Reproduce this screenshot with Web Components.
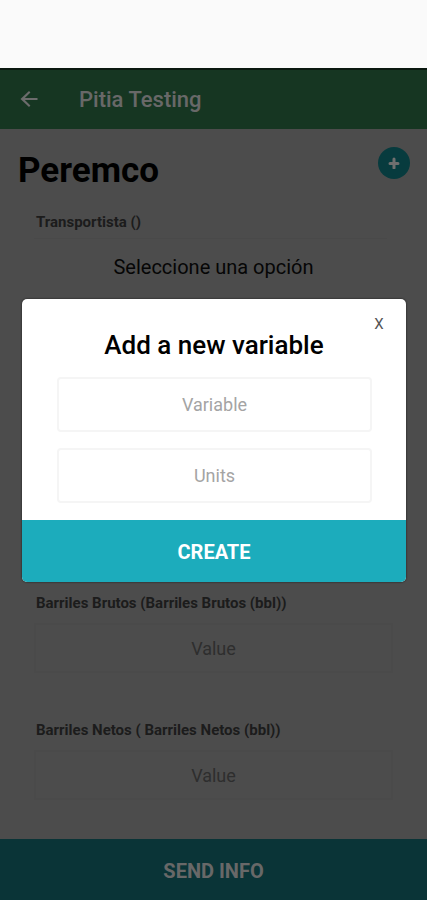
<!DOCTYPE html>
<html lang="es">
<head>
<meta charset="utf-8">
<meta name="viewport" content="width=device-width, initial-scale=1">
<title>Pitia Testing</title>
<style>
body {
  margin: 0;
  min-height: 100vh;
  display: flex;
  flex-direction: column;
  background: #fafafa;
  font-family: Roboto, "Liberation Sans", sans-serif;
}
</style>
</head>
<body>

<pitia-screen>
  <app-header slot="header">Pitia Testing</app-header>
  <title-row>Peremco</title-row>
  <field-list>
    <select-field label="Transportista ()" option="Seleccione una opción"></select-field>
    <value-field class="brutos" label="Barriles Brutos (Barriles Brutos (bbl))"></value-field>
    <value-field class="netos" label="Barriles Netos ( Barriles Netos (bbl))"></value-field>
  </field-list>
  <action-button slot="footer" dim>SEND INFO</action-button>
  <variable-dialog slot="dialog">Add a new variable</variable-dialog>
</pitia-screen>

<script>
/**
 * Attaches an open shadow root filled with the markup.
 *
 */
function render (element, markup) {
  const template = document.createElement('template')
  template.innerHTML = markup
  element.attachShadow({ mode: 'open' })
    .appendChild(template.content.cloneNode(true))
}

customElements.define('pitia-screen',
/**
 * The screen with its header, content, footer and dialog.
 *
 */
  class extends HTMLElement {
    constructor () {
      super()
      render(this, `
<style>
:host {
  flex: 1;
  display: flex;
  flex-direction: column;
  padding-top: 68px;
}
.app {
  flex: 1;
  display: flex;
  flex-direction: column;
  position: relative;
  background: #989898;
}
main {
  flex: 1;
}
.overlay {
  position: absolute;
  inset: 0;
  box-sizing: border-box;
  padding: 231px 21px 0 22px;
  background: rgba(0, 0, 0, .5);
}
</style>
<div class="app">
  <slot name="header"></slot>
  <main><slot></slot></main>
  <slot name="footer"></slot>
  <div class="overlay"><slot name="dialog"></slot></div>
</div>
`)
    }
  }
)

customElements.define('app-header',
/**
 * Top bar with the back button.
 *
 */
  class extends HTMLElement {
    constructor () {
      super()
      render(this, `
<style>
:host {
  display: block;
  background: #2c6c44;
  border-top: 2px solid #14301e;
}
header {
  display: flex;
  align-items: center;
  gap: 38px;
  height: 59px;
  padding: 0 17px;
}
button {
  display: flex;
  padding: 0;
  border: 0;
  background: none;
}
svg {
  fill: #d8d8d8;
}
h1 {
  margin: 0;
  color: #d0d0d0;
  font-size: 22px;
  font-weight: 500;
  line-height: 28px;
}
</style>
<header>
  <button type="button" aria-label="Back">
    <svg width="24" height="24" viewBox="0 0 24 24"><path d="M20.500 10H7.83l5.59-5.59L12 3l-8.500 8 8.500 8 1.41-1.41L7.83 12H20.500z"/></svg>
  </button>
  <h1><slot></slot></h1>
</header>
`)
    }
  }
)

customElements.define('title-row',
/**
 * Page title and the round add button.
 *
 */
  class extends HTMLElement {
    constructor () {
      super()
      render(this, `
<style>
:host {
  display: flex;
  justify-content: space-between;
  align-items: flex-start;
  padding: 18px 17px 0 18px;
}
h2 {
  margin: 4px 0 0;
  color: #000;
  font-size: 35px;
  font-weight: 700;
  line-height: 40px;
}
button {
  display: flex;
  align-items: center;
  justify-content: center;
  width: 32px;
  height: 32px;
  padding: 0;
  border: 0;
  border-radius: 50%;
  background: #0f767c;
}
</style>
<h2><slot></slot></h2>
<button type="button" aria-label="Add variable">
  <svg width="12" height="12" viewBox="0 0 12 12"><path d="M6 2v9M2 6.500h8" stroke="#dedede" stroke-width="3" stroke-linecap="round"/></svg>
</button>
`)
    }
  }
)

customElements.define('field-list',
/**
 * Rows of fields, one every 127px.
 *
 */
  class extends HTMLElement {
    constructor () {
      super()
      render(this, `
<style>
:host {
  display: grid;
  grid-auto-rows: 100px;
  row-gap: 27px;
  padding: 21px 34px 0;
}
/* rows 2 and 3 lie behind the dialog */
::slotted(.brutos) {
  grid-row: 4;
}
::slotted(.netos) {
  grid-row: 5;
}
</style>
<slot></slot>
`)
    }
  }
)

const fieldStyle = `
:host {
  display: block;
}
label {
  display: block;
  margin-bottom: 10px;
  padding-left: 2px;
  color: #383838;
  font-size: 15px;
  font-weight: 700;
  line-height: 20px;
}
input, select {
  display: block;
  box-sizing: border-box;
  width: 100%;
  height: 50px;
  padding: 0;
  border: 2px solid #959595;
  background: none;
  font-family: inherit;
  text-align: center;
}
`

customElements.define('select-field',
/**
 * Label with a drop-down under a thin rule.
 *
 */
  class extends HTMLElement {
    constructor () {
      super()
      render(this, `
<style>
${fieldStyle}
label {
  margin: 0 6px 3px 0;
  padding-bottom: 6px;
  border-bottom: 1px solid #929292;
}
select {
  appearance: none;
  border-color: transparent;
  color: #0c0c0c;
  font-size: 20px;
  text-align-last: center;
}
</style>
<label for="choice"></label>
<select id="choice"><option></option></select>
`)
      this.shadowRoot.querySelector('label').textContent = this.getAttribute('label')
      this.shadowRoot.querySelector('option').textContent = this.getAttribute('option')
    }
  }
)

customElements.define('value-field',
/**
 * Label with a value box.
 *
 */
  class extends HTMLElement {
    constructor () {
      super()
      render(this, `
<style>
${fieldStyle}
input {
  font-size: 18px;
}
input::placeholder {
  color: #5c5c5c;
}
</style>
<label for="value"></label>
<input id="value" type="text" placeholder="Value">
`)
      this.shadowRoot.querySelector('label').textContent = this.getAttribute('label')
    }
  }
)

customElements.define('action-button',
/**
 * Full width button.
 *
 */
  class extends HTMLElement {
    constructor () {
      super()
      render(this, `
<style>
:host {
  display: block;
}
button {
  display: block;
  box-sizing: border-box;
  width: 100%;
  height: 62px;
  padding: 2px 0 0;
  border: 0;
  background: #1cacbc;
  color: #fff;
  font-family: inherit;
  font-size: 20px;
  font-weight: 700;
}
:host([dim]) button {
  height: 61px;
  background: #14686e;
  color: #d0d0d0;
}
</style>
<button type="button"><slot></slot></button>
`)
    }
  }
)

customElements.define('variable-dialog',
/**
 * Dialog for a new variable.
 *
 */
  class extends HTMLElement {
    constructor () {
      super()
      render(this, `
<style>
:host {
  display: block;
}
form {
  overflow: hidden;
  border-radius: 5px;
  background: #fff;
  box-shadow: 0 0 2px #111;
}
.top {
  display: flex;
  justify-content: flex-end;
  padding: 15px 20px 0;
}
.close {
  width: 14px;
  height: 20px;
  padding: 0;
  border: 0;
  background: none;
  color: #555;
  font-family: inherit;
  font-size: 15px;
}
h2 {
  margin: 0 0 21px;
  color: #000;
  font-size: 26px;
  font-weight: 500;
  line-height: 22px;
  text-align: center;
}
.fields {
  display: grid;
  row-gap: 16px;
  padding: 0 34px 17px 35px;
}
input {
  box-sizing: border-box;
  width: 100%;
  height: 55px;
  padding: 0;
  border: 2px solid #f5f5f5;
  border-radius: 4px;
  background: #fff;
  font-family: inherit;
  font-size: 18px;
  text-align: center;
}
input::placeholder {
  color: #a4a4a4;
}
</style>
<form role="dialog" aria-labelledby="heading">
  <div class="top"><button class="close" type="button" aria-label="Close">X</button></div>
  <h2 id="heading"><slot></slot></h2>
  <div class="fields">
    <input type="text" aria-label="Variable" placeholder="Variable">
    <input type="text" aria-label="Units" placeholder="Units">
  </div>
  <action-button>CREATE</action-button>
</form>
`)
    }
  }
)
</script>
</body>
</html>
